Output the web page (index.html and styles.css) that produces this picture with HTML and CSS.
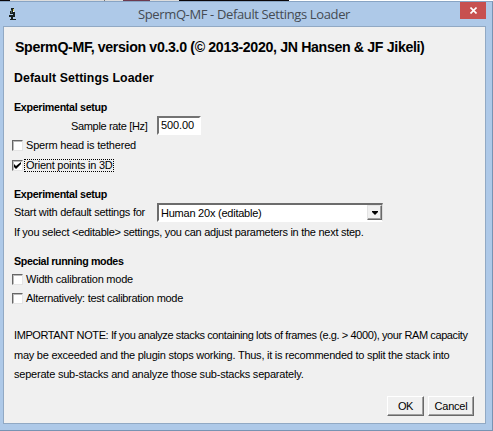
FILE: index.html
```html
<!DOCTYPE html>
<html lang="en">
<head>
<meta charset="utf-8">
<title>SpermQ-MF - Default Settings Loader</title>
<link rel="stylesheet" href="styles.css">
</head>
<body>
<div class="behind"></div>
<div class="window">
  <header class="titlebar">
    <svg class="app-icon" viewBox="0 0 8 13" width="8" height="13">
      <path d="M2 0h3v3H2zM1 3h4v3H1zM4 4h2v5H4zM0 7h5v2H0zM2 8h2v3H2zM1 11h6v1H1z" fill="#17201f"/>
      <path d="M2 2h1v3H2z" fill="#52645b"/><path d="M4 1h1v2H4z" fill="#e3c94b"/><path d="M4 3h1v1H4z" fill="#fff"/>
    </svg>
    <span class="caption">SpermQ-MF - Default Settings Loader</span>
    <button class="close" aria-label="Close"><svg viewBox="0 0 7 7" width="7" height="7"><path d="M.5.5l6 6M6.5.5l-6 6" stroke="#fff" stroke-width="1.6"/></svg></button>
  </header>
  <main class="content">
    <h1><span class="t-h1">SpermQ-MF, version v0.3.0 (© 2013-2020, JN Hansen &amp; JF Jikeli)</span></h1>
    <h2><span class="t-h2">Default Settings Loader</span></h2>
    <h3><span class="t-exp">Experimental setup</span></h3>
    <div class="row sample"><span class="t-sample">Sample rate [Hz]</span><div class="field"><span class="t-num">500.00</span></div></div>
    <div class="row check"><i class="box"></i><span class="t-teth">Sperm head is tethered</span></div>
    <div class="row check orient"><i class="box"><svg viewBox="0 0 7 7" width="7" height="7"><path d="M0 2v3l2 2 5-5V0L2 4z"/></svg></i><span class="focus"><span class="t-orient">Orient points in 3D</span></span></div>
    <h3 class="section"><span class="t-exp">Experimental setup</span></h3>
    <div class="row start"><span class="t-start">Start with default settings for</span><div class="select"><span class="t-human">Human 20x (editable)</span><i class="drop"><svg viewBox="0 0 6 4" width="6" height="4"><path d="M0 0h6v1L3 4 0 1z"/></svg></i></div></div>
    <div class="row line"><span class="t-if">If you select &lt;editable&gt; settings, you can adjust parameters in the next step.</span></div>
    <h3 class="section special"><span class="t-special">Special running modes</span></h3>
    <div class="row check width"><i class="box"></i><span class="t-width">Width calibration mode</span></div>
    <div class="row check"><i class="box"></i><span class="t-alt">Alternatively: test calibration mode</span></div>
    <div class="note">
      <div><span class="t-n1">IMPORTANT NOTE: If you analyze stacks containing lots of frames (e.g. &gt; 4000), your RAM capacity</span></div>
      <div><span class="t-n2">may be exceeded and the plugin stops working. Thus, it is recommended to split the stack into</span></div>
      <div><span class="t-n3">seperate sub-stacks and analyze those sub-stacks separately.</span></div>
    </div>
    <footer><button class="btn ok"><span class="t-ok">OK</span></button><button class="btn cancel"><span class="t-cancel">Cancel</span></button></footer>
  </main>
</div>
<script src="fit.js"></script>
</body>
</html>
```
FILE: styles.css
```css
* { box-sizing: border-box; }
body { margin: 0; width: 493px; height: 431px; overflow: hidden; background: #fff; font: 11px/19px "Liberation Sans", Arial, sans-serif; color: #000; }
span { white-space: nowrap; }
.behind { height: 1px; background: linear-gradient(90deg, #0a0608 10px, #ddd 10px 104px, #777 104px 105px, #ddd 105px 123px, #6d3a4e 123px 150px, #ddd 150px 179px, #0a0608 179px 289px, #fff 289px); }
.window { width: 493px; height: 430px; padding: 0 6px 6px 3px; background: #aec9e8; border-top: 1px solid #88a4c4; border-right: 1px solid #7893b3; border-bottom: 1px solid #7893b3; }
.titlebar { display: flex; height: 24px; align-items: flex-start; }
.app-icon { margin: 6px 0 0 6px; }
.caption { margin: 3px 0 0 121px; font: 13px/18px "Open Sans", "Noto Sans", sans-serif; color: #454b53; }
.close { display: flex; align-items: center; justify-content: center; width: 26px; height: 17px; margin-left: auto; border: 0; padding: 0; background: #c75050; }
.content { height: 398px; border: 1px solid #91a9c4; background: #f0f0f0; padding: 7px 0 0 10px; }
h1, h2, h3 { margin: 0; font-weight: bold; }
h1 { height: 26px; font-size: 14.2px; line-height: 26px; padding-left: 1px; }
h2 { height: 20px; margin-top: 8px; font-size: 12.3px; line-height: 20px; }
h3 { height: 19px; margin-top: 9px; font-size: 10.7px; line-height: 20px; }
.row { display: flex; height: 19px; align-items: center; }
.sample { height: 20px; padding-left: 57px; }
.field { width: 44px; height: 19px; margin: -2px 284px 0 auto; padding-left: 2px; line-height: 15px; background: #fff; border: 2px solid; border-color: #737373 #fff #fff #737373; }
.check { margin-left: -2px; }
.orient { height: 20px; }
.box { flex: none; display: flex; align-items: center; justify-content: center; width: 11px; height: 11px; margin-right: 2px; background: #fff; border: 1px solid; border-color: #666 #e5e5e5 #e5e5e5 #666; box-shadow: inset 1px 1px #bbb; }
.check > span { padding-left: 1px; }
.focus { height: 13px; width: 90px; line-height: 11px; border: 1px dotted #000; margin-left: -1px; }
.start { height: 19px; }
.select { display: flex; justify-content: space-between; width: 226px; height: 19px; margin-left: auto; margin-right: 102px; padding-left: 2px; line-height: 16px; border: 2px solid; border-color: #6c6c6c #fff #fff #6c6c6c; border-right: 1px solid #ddd; background: #fff; }
.drop { display: flex; align-items: center; justify-content: center; width: 15px; height: 15px; background: #f0f0f0; border: 1px solid; border-color: #e3e3e3 #696969 #696969 #e3e3e3; box-shadow: inset -1px -1px #a0a0a0; }
.line { height: 20px; }
.note { margin-top: 18px; line-height: 19.5px; }
.note > div { height: 19.5px; }
footer { display: flex; justify-content: flex-end; gap: 4px; margin: 11px 11px 0 0; }
.btn { display: flex; align-items: center; justify-content: center; height: 20px; padding: 0; border: 1px solid; border-color: #fff #696969 #696969 #fff; box-shadow: inset -1px -1px #a0a0a0; background: #f0f0f0; font: 11px/16px "Liberation Sans", Arial, sans-serif; color: #000; }
.ok { width: 37px; }
.cancel { width: 46px; }
```
FILE: fit.js
```js
const widths = {
  'caption': 212, 't-h1': 409.5, 't-h2': 140, 't-exp': 93, 't-sample': 76.5, 't-num': 33,
  't-teth': 110, 't-orient': 86.5, 't-start': 131, 't-human': 100.5, 't-if': 349.5,
  't-special': 109.5, 't-width': 107, 't-alt': 157, 't-n1': 453.5, 't-n2': 435.5, 't-n3': 289.5,
  't-ok': 15, 't-cancel': 33
};
for (const [name, width] of Object.entries(widths)) {
  for (const el of document.getElementsByClassName(name)) {
    const range = document.createRange();
    range.selectNodeContents(el);
    const natural = range.getBoundingClientRect().width;
    el.style.letterSpacing = (width - natural) / el.textContent.length + 'px';
  }
}
```
